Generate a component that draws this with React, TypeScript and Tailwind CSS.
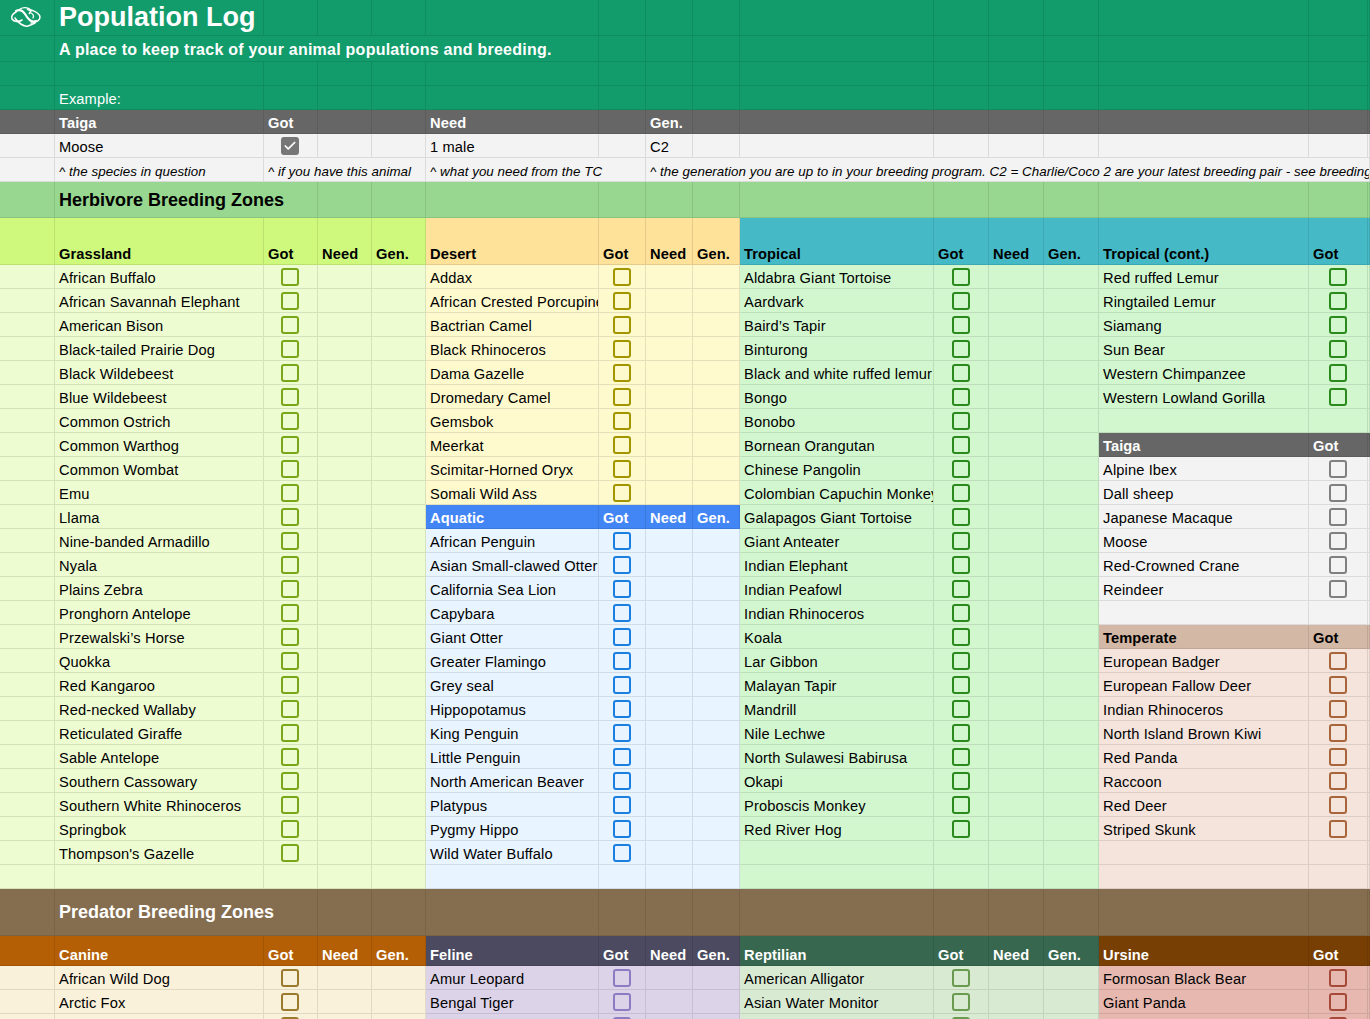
import { Check } from "lucide-react"

type Theme = { head: string; cell: string; box: string }
type Slot = { theme: Theme; head?: string; name?: string; box?: boolean }

const base = "overflow-hidden whitespace-nowrap border-r border-b p-0 align-bottom"
const text = base + " pl-1"
const body = text + " pb-[1px] tracking-[0.12px]"
const bold = text + " pb-[1px] font-bold tracking-[0.08px]"
const note = text + " pb-[1px] text-[13.33px] italic tracking-[0.05px]"

const grass: Theme = { head: "bg-[#cff97c] border-[#bbe070] text-black", cell: "bg-[#eefcd2] border-[#d5e2bb] text-black", box: "border-[#7aa61a]" }
const desert: Theme = { head: "bg-[#ffe299] border-[#e5cb8a] text-black", cell: "bg-[#fffacd] border-[#e5e0b9] text-black", box: "border-[#a39500]" }
const aquatic: Theme = { head: "bg-[#4285f4] border-[#3b78dc] text-white", cell: "bg-[#e8f4ff] border-[#d1dce6] text-black", box: "border-[#1a7fe0]" }
const tropical: Theme = { head: "bg-[#45bac6] border-[#3ea7b2] text-black", cell: "bg-[#d2f7cf] border-[#bddeba] text-black", box: "border-[#2a8a1c]" }
const taiga: Theme = { head: "bg-[#666666] border-[#5c5c5c] text-white", cell: "bg-[#f3f3f3] border-[#dbdbdb] text-black", box: "border-[#808080]" }
const temperate: Theme = { head: "bg-[#d4b8a6] border-[#bfa595] text-black", cell: "bg-[#f4e4dc] border-[#dccdc6] text-black", box: "border-[#a8653c]" }
const canine: Theme = { head: "bg-[#b45f06] border-[#a25605] text-white", cell: "bg-[#faf1da] border-[#e1d9c4] text-black", box: "border-[#9a7b2e]" }
const feline: Theme = { head: "bg-[#4b4a60] border-[#444356] text-white", cell: "bg-[#dcd3e8] border-[#c6bed1] text-black", box: "border-[#8e7cc3]" }
const reptilian: Theme = { head: "bg-[#38674f] border-[#325d47] text-white", cell: "bg-[#d9ead3] border-[#c3d3be] text-black", box: "border-[#6a9a50]" }
const ursine: Theme = { head: "bg-[#783f04] border-[#6c3904] text-white", cell: "bg-[#e6b8af] border-[#cfa69e] text-black", box: "border-[#a54a3a]" }

const head = (theme: Theme, name: string): Slot[] => [{ theme, head: name }]
const names = (theme: Theme, list: string[]): Slot[] => list.map((name) => ({ theme, name, box: true }))
const blank = (theme: Theme, n: number): Slot[] => Array.from({ length: n }, () => ({ theme }))

const herbivore: Slot[][] = [
  names(grass, [
    "African Buffalo", "African Savannah Elephant", "American Bison", "Black-tailed Prairie Dog", "Black Wildebeest",
    "Blue Wildebeest", "Common Ostrich", "Common Warthog", "Common Wombat", "Emu", "Llama", "Nine-banded Armadillo",
    "Nyala", "Plains Zebra", "Pronghorn Antelope", "Przewalski’s Horse", "Quokka", "Red Kangaroo", "Red-necked Wallaby",
    "Reticulated Giraffe", "Sable Antelope", "Southern Cassowary", "Southern White Rhinoceros", "Springbok", "Thompson's Gazelle",
  ]).concat(blank(grass, 1)),
  [
    ...names(desert, [
      "Addax", "African Crested Porcupine", "Bactrian Camel", "Black Rhinoceros", "Dama Gazelle", "Dromedary Camel",
      "Gemsbok", "Meerkat", "Scimitar-Horned Oryx", "Somali Wild Ass",
    ]),
    ...head(aquatic, "Aquatic"),
    ...names(aquatic, [
      "African Penguin", "Asian Small-clawed Otter", "California Sea Lion", "Capybara", "Giant Otter", "Greater Flamingo",
      "Grey seal", "Hippopotamus", "King Penguin", "Little Penguin", "North American Beaver", "Platypus", "Pygmy Hippo",
      "Wild Water Buffalo",
    ]),
    ...blank(aquatic, 1),
  ],
  names(tropical, [
    "Aldabra Giant Tortoise", "Aardvark", "Baird’s Tapir", "Binturong", "Black and white ruffed lemur", "Bongo", "Bonobo",
    "Bornean Orangutan", "Chinese Pangolin", "Colombian Capuchin Monkey", "Galapagos Giant Tortoise", "Giant Anteater",
    "Indian Elephant", "Indian Peafowl", "Indian Rhinoceros", "Koala", "Lar Gibbon", "Malayan Tapir", "Mandrill",
    "Nile Lechwe", "North Sulawesi Babirusa", "Okapi", "Proboscis Monkey", "Red River Hog",
  ]).concat(blank(tropical, 2)),
  [
    ...names(tropical, ["Red ruffed Lemur", "Ringtailed Lemur", "Siamang", "Sun Bear", "Western Chimpanzee", "Western Lowland Gorilla"]),
    ...blank(tropical, 1),
    ...head(taiga, "Taiga"),
    ...names(taiga, ["Alpine Ibex", "Dall sheep", "Japanese Macaque", "Moose", "Red-Crowned Crane", "Reindeer"]),
    ...blank(taiga, 1),
    ...head(temperate, "Temperate"),
    ...names(temperate, [
      "European Badger", "European Fallow Deer", "Indian Rhinoceros", "North Island Brown Kiwi", "Red Panda", "Raccoon",
      "Red Deer", "Striped Skunk",
    ]),
    ...blank(temperate, 2),
  ],
]

const predator: Slot[][] = [
  names(canine, ["African Wild Dog", "Arctic Fox", ""]),
  names(feline, ["Amur Leopard", "Bengal Tiger", ""]),
  names(reptilian, ["American Alligator", "Asian Water Monitor", ""]),
  names(ursine, ["Formosan Black Bear", "Giant Panda", ""]),
]

const widths = [
  "w-[55px]", "w-[209px]", "w-[54px]", "w-[54px]", "w-[54px]", "w-[173px]", "w-[47px]", "w-[47px]",
  "w-[47px]", "w-[194px]", "w-[55px]", "w-[55px]", "w-[55px]", "w-[210px]", "w-[59px]", "w-[2px]",
]

function Logo() {
  return (
    <svg width="32" height="22" viewBox="0 0 32 22" fill="none" stroke="white" className="mb-[7px] ml-[10px] block">
      <path d="M6 6C2 8 1 11 2 13c2 3 7 3 10 1" strokeWidth="1.6" strokeLinecap="round" />
      <path d="M10 3c3-2 8-2 11 1 4 1 9 4 9 7 0 4-5 6-9 6" strokeWidth="1.4" strokeLinecap="round" />
      <path d="M6 5c4-2 7 0 9 3 3 5 6 9 11 7" strokeWidth="2.2" strokeLinecap="round" />
      <path d="M5 12c3 5 9 9 13 8 3-1 5-2 7-3" strokeWidth="1.5" strokeLinecap="round" />
      <path d="M17 3l4 2-2 3" strokeWidth="1.5" strokeLinejoin="round" />
      <path d="M21 7c2 1 3 3 2 5" strokeWidth="1.3" strokeLinecap="round" />
    </svg>
  )
}

function Box({ color }: { color: string }) {
  return (
    <div className="flex justify-center pb-[2px] pr-[1px]">
      <span className={"h-[18px] w-[18px] rounded-[3px] border-2 " + color} />
    </div>
  )
}

function Blanks({ count, cls }: { count: number; cls: string }) {
  return (
    <>
      {Array.from({ length: count }, (_, i) => (
        <td key={i} className={base + " " + cls} />
      ))}
    </>
  )
}

// one zone in one row: name, got and then need/gen (or the thin tail column in the last zone)
function ZoneCells({ slot, last }: { slot: Slot; last: boolean }) {
  if (slot.head) {
    return (
      <>
        <td className={bold + " " + slot.theme.head}>{slot.head}</td>
        <td className={bold + " " + slot.theme.head}>Got</td>
        <td className={bold + " " + slot.theme.head}>{last ? "" : "Need"}</td>
        {!last && <td className={bold + " " + slot.theme.head}>Gen.</td>}
      </>
    )
  }
  return (
    <>
      <td className={body + " " + slot.theme.cell}>{slot.name}</td>
      <td className={base + " " + slot.theme.cell}>{slot.box && <Box color={slot.theme.box} />}</td>
      <td className={base + " " + slot.theme.cell} />
      {!last && <td className={base + " " + slot.theme.cell} />}
    </>
  )
}

function Section({ columns, gutter, heads, rowCount }: { columns: Slot[][]; gutter: Theme; heads: Theme[]; rowCount: number }) {
  const labels = gutter === grass ? ["Grassland", "Desert", "Tropical", "Tropical (cont.)"] : ["Canine", "Feline", "Reptilian", "Ursine"]
  return (
    <>
      <tr className={gutter === grass ? "h-[47px]" : "h-[30px]"}>
        <td className={base + " " + gutter.head} />
        {heads.map((t, i) => (
          <ZoneCells key={i} slot={{ theme: t, head: labels[i] }} last={i === 3} />
        ))}
      </tr>
      {Array.from({ length: rowCount }, (_, r) => (
        <tr key={r} className="h-[24px]">
          <td className={base + " " + gutter.cell} />
          {columns.map((col, i) => (
            <ZoneCells key={i} slot={col[r]} last={i === 3} />
          ))}
        </tr>
      ))}
    </>
  )
}

export default function App() {
  const green = "bg-[#129b6b] border-[#0f8c60] text-white"
  const grey = "bg-[#666666] border-[#5c5c5c] text-white"
  const light = "bg-[#f3f3f3] border-[#dbdbdb] text-black"
  const band = "bg-[#98d78f] border-[#89c381] text-black"
  const brown = "bg-[#856d4f] border-[#786348] text-white"

  return (
    <div className="h-[1019px] w-[1370px] overflow-hidden font-['Liberation_Sans',Arial,sans-serif] text-[14.67px] leading-[17px]">
      <table className="w-[1370px] table-fixed border-separate border-spacing-0">
        <colgroup>
          {widths.map((w, i) => (
            <col key={i} className={w} />
          ))}
        </colgroup>
        <tbody>
          <tr className="h-[36px]">
            <td className={base + " " + green}><Logo /></td>
            <td className={text + " pb-[2px] text-[27px] leading-[32px] font-bold " + green}>Population Log</td>
            <Blanks count={14} cls={green} />
          </tr>
          <tr className="h-[26px]">
            <td className={base + " " + green} />
            <td colSpan={5} className={text + " pb-[3px] text-[16px] font-bold tracking-[0.24px] " + green}>A place to keep track of your animal populations and breeding.</td>
            <Blanks count={10} cls={green} />
          </tr>
          <tr className="h-[24px]">
            <Blanks count={16} cls={green} />
          </tr>
          <tr className="h-[24px]">
            <td className={base + " " + green} />
            <td className={body + " " + green}>Example:</td>
            <Blanks count={14} cls={green} />
          </tr>
          <tr className="h-[24px]">
            <td className={base + " " + grey} />
            <td className={bold + " " + grey}>Taiga</td>
            <td className={bold + " " + grey}>Got</td>
            <Blanks count={2} cls={grey} />
            <td className={bold + " " + grey}>Need</td>
            <td className={base + " " + grey} />
            <td className={bold + " " + grey}>Gen.</td>
            <Blanks count={8} cls={grey} />
          </tr>
          <tr className="h-[24px]">
            <td className={base + " " + light} />
            <td className={body + " " + light}>Moose</td>
            <td className={base + " " + light}>
              <div className="flex justify-center pb-[2px] pr-[1px]">
                <span className="flex h-[18px] w-[18px] items-center justify-center rounded-[3px] bg-[#777777]">
                  <Check size={14} strokeWidth={3} className="text-white" />
                </span>
              </div>
            </td>
            <Blanks count={2} cls={light} />
            <td className={body + " " + light}>1 male</td>
            <td className={base + " " + light} />
            <td className={body + " " + light}>C2</td>
            <Blanks count={8} cls={light} />
          </tr>
          <tr className="h-[24px]">
            <td className={base + " " + light} />
            <td className={note + " " + light}>^ the species in question</td>
            <td colSpan={3} className={note + " " + light}>^ if you have this animal</td>
            <td colSpan={2} className={note + " " + light}>^ what you need from the TC</td>
            <td colSpan={9} className={note + " " + light}>^ the generation you are up to in your breeding program. C2 = Charlie/Coco 2 are your latest breeding pair - see breeding guide</td>
          </tr>
          <tr className="h-[36px]">
            <td className={base + " " + band} />
            <td colSpan={2} className={text + " pb-[7px] text-[18px] leading-[20px] font-bold " + band}>Herbivore Breeding Zones</td>
            <Blanks count={13} cls={band} />
          </tr>
          <Section columns={herbivore} gutter={grass} heads={[grass, desert, tropical, tropical]} rowCount={26} />
          <tr className="h-[47px]">
            <td className={base + " " + brown} />
            <td colSpan={2} className={text + " pb-[13px] text-[18px] leading-[20px] font-bold " + brown}>Predator Breeding Zones</td>
            <Blanks count={13} cls={brown} />
          </tr>
          <Section columns={predator} gutter={canine} heads={[canine, feline, reptilian, ursine]} rowCount={3} />
        </tbody>
      </table>
    </div>
  )
}
